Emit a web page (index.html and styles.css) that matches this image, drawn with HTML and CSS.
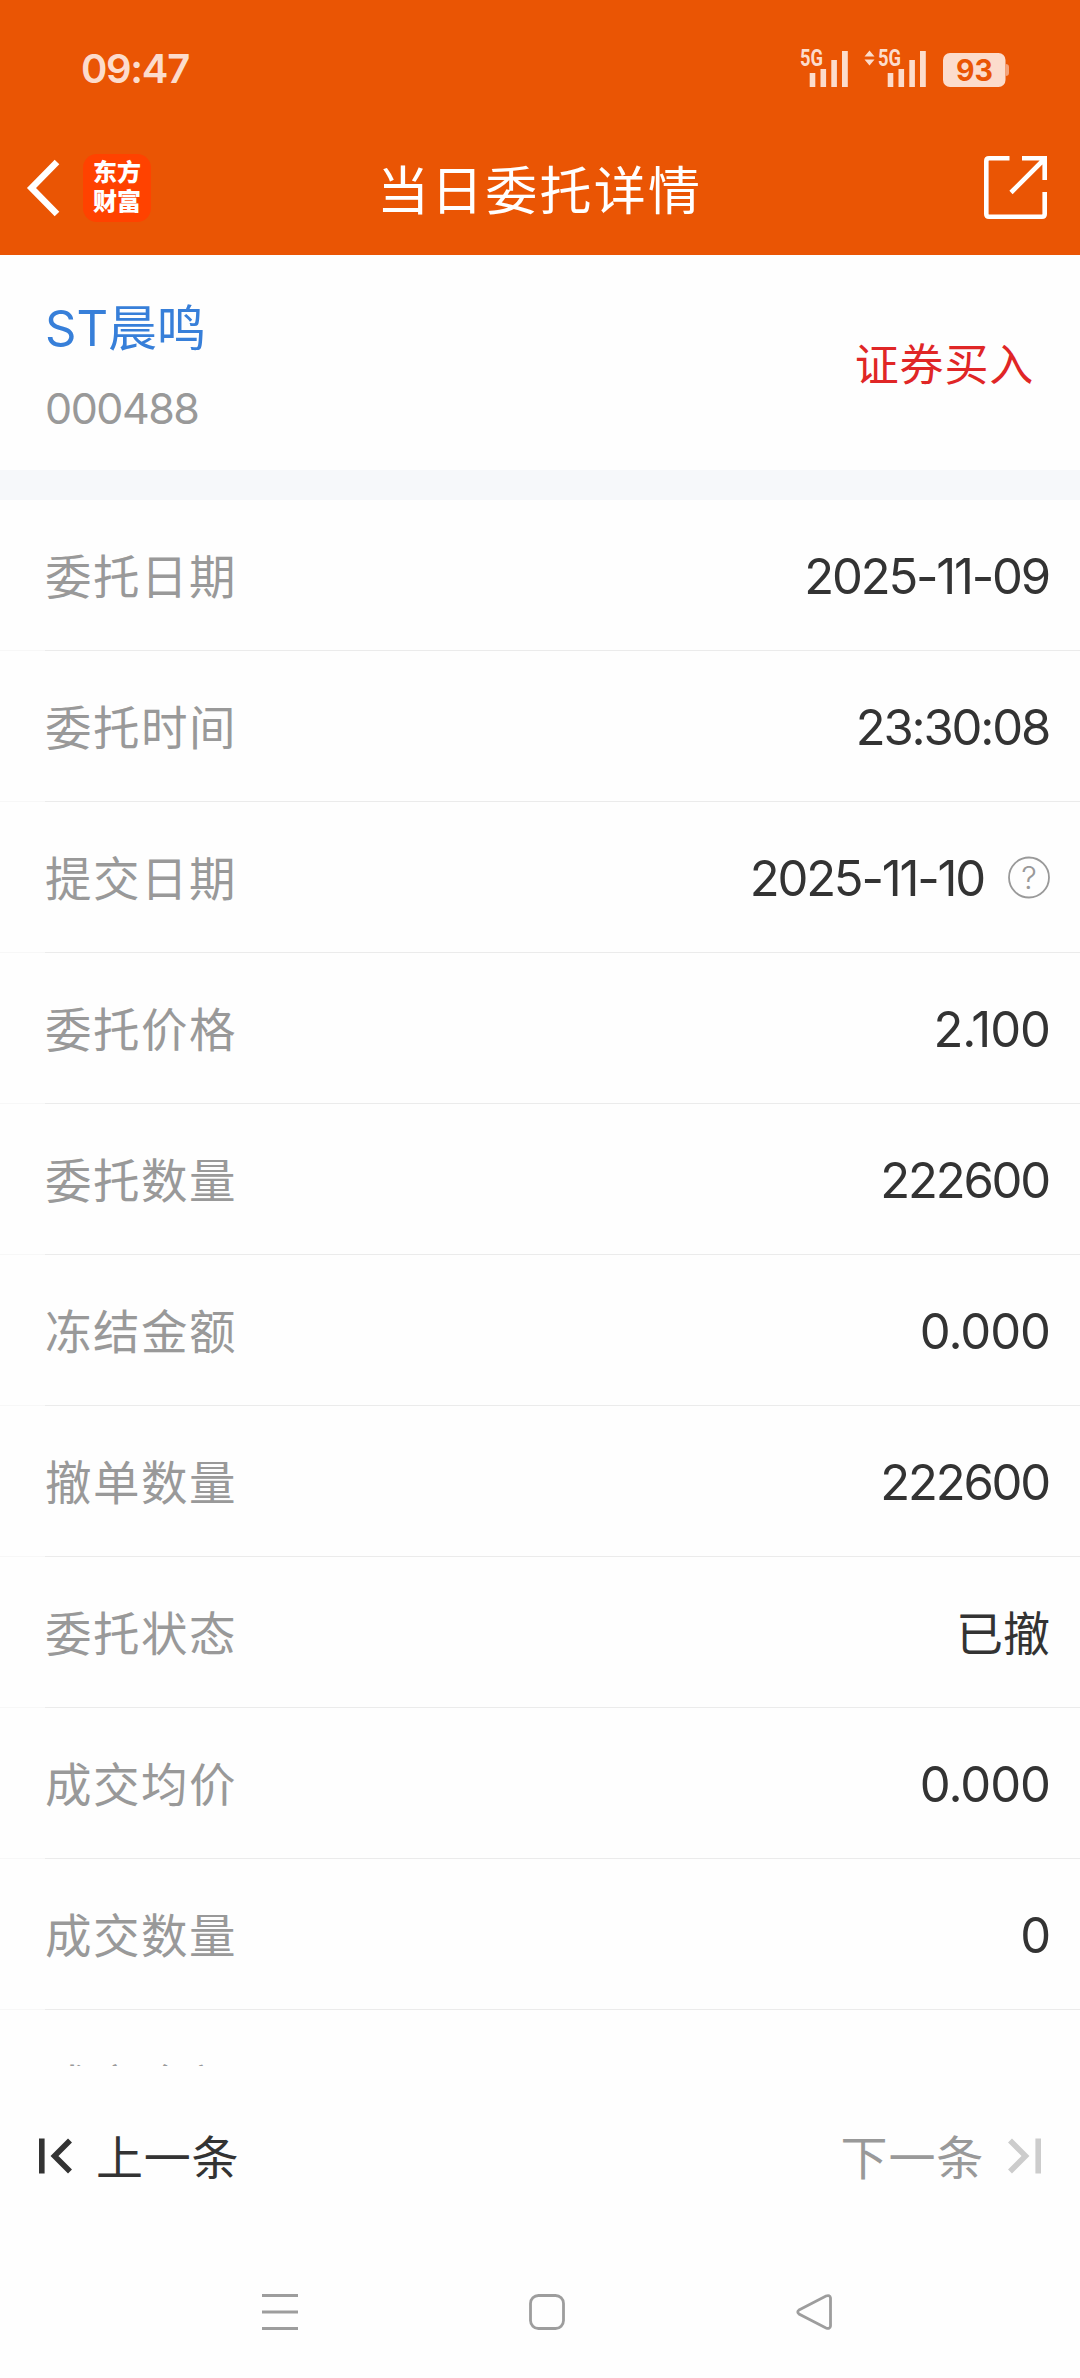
FILE: index.html
```html
<!DOCTYPE html>
<html lang="zh-CN">

<head>
  <meta charset="UTF-8">
  <meta name="viewport" content="width=device-width, initial-scale=1.0">
  <title>当日委托详情</title>
  <link rel="stylesheet" href="styles.css">
</head>

<body>
  <header class="header">
    <!-- Status bar -->
    <div class="status-bar">
      <span class="time">09:47</span>
      <svg class="status-icons" width="212" height="40" viewBox="0 0 212 40">
        <g class="signal">
          <text x="0" y="18" textLength="23" lengthAdjust="spacingAndGlyphs">5G</text>
          <path d="M9.7 25h5.6v14H9.7zM20.5 21h5.6v18h-5.6zM31.3 12h5.6v27h-5.6zM42 3h5.8v36H42z"/>
        </g>
        <path class="signal" d="M64.5 8.5L69.5 2.5l5 6zM64.5 11.5h10l-5 6z"/>
        <g class="signal" transform="translate(78 0)">
          <text x="0" y="18" textLength="23" lengthAdjust="spacingAndGlyphs">5G</text>
          <path d="M9.7 25h5.6v14H9.7zM20.5 21h5.6v18h-5.6zM31.3 12h5.6v27h-5.6zM42 3h5.8v36H42z"/>
        </g>
        <rect class="signal" x="143" y="5" width="62.5" height="34" rx="7"/>
        <path class="battery-tip" d="M205.5 16q3.5 0 3.5 3v6q0 3-3.5 3z"/>
        <text class="battery-level" x="156" y="33" textLength="37" lengthAdjust="spacingAndGlyphs">93</text>
      </svg>
    </div>

    <!-- Title bar -->
    <div class="title-bar">
      <div class="title-left">
        <svg class="back" width="32" height="56" viewBox="0 0 32 56">
          <path d="M30 2L4.500 28 30 54"/>
        </svg>
        <div class="logo"><span>东方</span><span>财富</span></div>
      </div>
      <h1>当日委托详情</h1>
      <svg class="share" width="63" height="63" viewBox="0 0 63 63">
        <path d="M25.500 2.300H5q-2.700 0-2.700 2.700v53q0 2.700 2.700 2.700h53q2.700 0 2.700-2.700V36M38 2.300h22.700V24M27 36.500L60 3.500"/>
      </svg>
    </div>
  </header>

  <section class="stock">
    <div>
      <div class="stock-name">ST晨鸣</div>
      <div class="stock-code">000488</div>
    </div>
    <div class="direction">证券买入</div>
  </section>

  <!-- Order details -->
  <main class="details">
    <div class="row"><span class="label">委托日期</span><span class="value">2025-11-09</span></div>
    <div class="row"><span class="label">委托时间</span><span class="value">23:30:08</span></div>
    <div class="row">
      <span class="label">提交日期</span>
      <span class="value">2025-11-10</span>
      <svg class="help" width="42" height="42" viewBox="0 0 42 42">
        <circle cx="21" cy="20.500" r="20"/>
        <text x="21" y="31.500" text-anchor="middle">?</text>
      </svg>
    </div>
    <div class="row"><span class="label">委托价格</span><span class="value decimal">2.100</span></div>
    <div class="row"><span class="label">委托数量</span><span class="value">222600</span></div>
    <div class="row"><span class="label">冻结金额</span><span class="value decimal">0.000</span></div>
    <div class="row"><span class="label">撤单数量</span><span class="value">222600</span></div>
    <div class="row"><span class="label">委托状态</span><span class="value text">已撤</span></div>
    <div class="row"><span class="label">成交均价</span><span class="value decimal">0.000</span></div>
    <div class="row"><span class="label">成交数量</span><span class="value">0</span></div>
    <div class="row"><span class="label">成交金额</span></div>
  </main>

  <!-- Previous / next order -->
  <div class="pager">
    <div class="pager-btn">
      <svg width="33" height="36" viewBox="0 0 33 36">
        <path d="M2.800 .5v35M31 2.500L15.500 18 31 33.500"/>
      </svg>
      <span>上一条</span>
    </div>
    <div class="pager-btn disabled">
      <span>下一条</span>
      <svg width="33" height="36" viewBox="0 0 33 36">
        <path d="M30.200 .5v35M2 2.500L17.500 18 2 33.500"/>
      </svg>
    </div>
  </div>

  <nav class="system-nav">
    <svg width="36" height="38" viewBox="0 0 36 38">
      <path d="M0 2.500h36M0 19h36M0 35.500h36"/>
    </svg>
    <svg width="36" height="38" viewBox="0 0 36 38">
      <rect x="1.500" y="2.500" width="33" height="33" rx="8"/>
    </svg>
    <svg width="36" height="38" viewBox="0 0 36 38">
      <path d="M3 17L30 3q4-1.500 4.500 2v28q-.5 3.500-4.500 2L3 21q-2.500-2 0-4z"/>
    </svg>
  </nav>
</body>

</html>
```
FILE: styles.css
```css
* {
  box-sizing: border-box;
}

body {
  margin: 0;
  height: 2378px;
  display: flex;
  flex-direction: column;
  overflow: hidden;
  font-family: Inter, 'Noto Sans CJK SC', sans-serif;
  background-color: #fefefe;
  color: #333;
}

svg {
  display: block;
  flex: none;
  fill: none;
  overflow: visible;
}

.header {
  height: 255px;
  flex: none;
  background-color: #ea5504;
  color: #fff;
}

.status-bar {
  height: 120px;
  padding: 16px 68px 0 81px;
  display: flex;
  justify-content: space-between;
  align-items: center;
}

.time {
  font-size: 40px;
  font-weight: 600;
  letter-spacing: -1.3px;
  color: #fcdccc;
}

.signal {
  fill: #fcdccc;
  font-family: Roboto, sans-serif;
  font-size: 23px;
  font-weight: bold;
}

.battery-tip {
  fill: #f3a37c;
}

.battery-level {
  fill: #ea5504;
  font-size: 30px;
  font-weight: 700;
}

.title-bar {
  height: 135px;
  padding: 0 33px 0 27px;
  display: grid;
  grid-template-columns: 1fr auto 1fr;
  align-items: center;
}

.title-left {
  display: flex;
  align-items: center;
  gap: 24px;
}

.back {
  stroke: #fff;
  stroke-width: 6.5;
}

.logo {
  width: 68px;
  height: 68px;
  border-radius: 14px;
  background-color: #ff4200;
  display: flex;
  flex-direction: column;
  align-items: center;
  justify-content: center;
  padding-bottom: 2px;
  font-size: 24px;
  font-weight: 900;
  line-height: 29px;
}

h1 {
  margin: 0 -5px 1px 0;
  font-size: 52px;
  font-weight: 400;
  letter-spacing: 2.2px;
}

.share {
  justify-self: end;
  stroke: #fff;
  stroke-width: 4.6;
}

.stock {
  height: 245px;
  flex: none;
  padding: 10px 46px 0 45px;
  display: flex;
  justify-content: space-between;
  align-items: center;
  border-bottom: 30px solid #f6f8fa;
}

.stock-name {
  font-size: 49px;
  line-height: 80px;
  color: #377fd9;
}

.stock-code {
  font-size: 43px;
  line-height: 78px;
  letter-spacing: -1.5px;
  color: #999;
}

.direction {
  padding-bottom: 12px;
  font-size: 44px;
  letter-spacing: 0.8px;
  color: #e02626;
}

.details {
  height: 1566px;
  flex: none;
  overflow: hidden;
}

.row {
  height: 151px;
  padding: 0 30px 0 45px;
  display: flex;
  align-items: center;
  background: linear-gradient(to right, #f7f7f7 45px, #ebebeb 45px) bottom / 100% 1px no-repeat;
}

.label {
  margin-right: auto;
  padding-bottom: 5px;
  font-size: 46.5px;
  letter-spacing: 1.5px;
  color: #999;
}

.value {
  margin-right: 1px;
  padding-top: 1px;
  font-size: 49px;
  letter-spacing: -2.2px;
}

.value.decimal {
  margin-right: 0;
  letter-spacing: -1px;
}

.value.text {
  margin-right: 0;
  padding: 0 0 5px;
  font-size: 47px;
  letter-spacing: 0;
}

.help {
  margin-left: 23px;
  stroke: #999;
  stroke-width: 1.8;
}

.help text {
  font-size: 31px;
  font-weight: 300;
  fill: #999;
  stroke: none;
}

.pager {
  height: 184px;
  flex: none;
  padding: 0 39px 4px;
  display: flex;
  justify-content: space-between;
  align-items: center;
}

.pager-btn {
  display: flex;
  align-items: center;
  gap: 24px;
  font-size: 47px;
  letter-spacing: 0.8px;
}

.pager-btn span {
  padding-bottom: 4px;
}

.pager-btn svg {
  stroke: #333;
  stroke-width: 5.6;
}

.pager-btn.disabled {
  color: #999;
}

.pager-btn.disabled svg {
  stroke: #ccc;
}

.system-nav {
  height: 128px;
  flex: none;
  padding: 0 248px 4px 262px;
  display: flex;
  justify-content: space-between;
  align-items: center;
}

.system-nav svg {
  stroke: #9d9d9d;
  stroke-width: 2.8;
}
```
